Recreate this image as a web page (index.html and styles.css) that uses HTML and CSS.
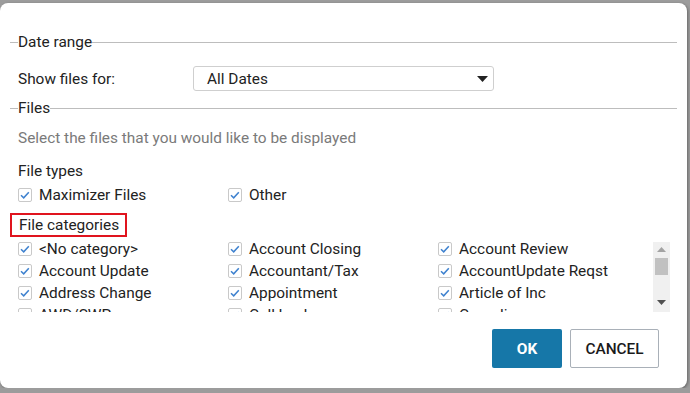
FILE: index.html
```html
<!DOCTYPE html>
<html>
<head>
<title>File filter</title>
<link rel="stylesheet" href="styles.css">
</head>
<body>
<div class="dialog">
	<div class="legend"><span class="legend_line_start"></span><span class="legend_text">Date range</span><span class="legend_line"></span></div>
	<div class="date_row">
		<label class="date_label" for="date_select">Show files for:</label>
		<div class="select_box" id="date_select">
			<span>All Dates</span>
			<svg class="select_arrow" width="11" height="6" viewBox="0 0 11 6"><polygon points="0,0 11,0 5.5,6" fill="#222"/></svg>
		</div>
	</div>
	<div class="legend files_legend"><span class="legend_line_start"></span><span class="legend_text">Files</span><span class="legend_line"></span></div>
	<div class="hint">Select the files that you would like to be displayed</div>
	<div class="group_title">File types</div>
	<div class="type_row">
		<div class="check_item"><span class="check_box"><svg width="14" height="14" viewBox="0 0 14 14"><polyline points="3,7.2 5.7,9.8 10.8,4.2" fill="none" stroke="#3f82cf" stroke-width="1.5"/></svg></span>Maximizer Files</div>
		<div class="check_item"><span class="check_box"><svg width="14" height="14" viewBox="0 0 14 14"><polyline points="3,7.2 5.7,9.8 10.8,4.2" fill="none" stroke="#3f82cf" stroke-width="1.5"/></svg></span>Other</div>
	</div>
	<div class="category_title"><span class="marked">File categories</span></div>
	<div class="category_area">
		<div class="category_view" id="category_grid"></div>
		<div class="scroll_bar">
			<svg class="scroll_up" width="9" height="5" viewBox="0 0 9 5"><polygon points="4.5,0 9,5 0,5" fill="#a3a3a3"/></svg>
			<div class="scroll_thumb"></div>
			<svg class="scroll_down" width="9" height="5" viewBox="0 0 9 5"><polygon points="0,0 9,0 4.5,5" fill="#505050"/></svg>
		</div>
	</div>
	<div class="button_row">
		<button class="ok_btn">OK</button>
		<button class="cancel_btn">CANCEL</button>
	</div>
</div>
<script>
	var categories = ["<No category>", "Account Closing", "Account Review",
		"Account Update", "Accountant/Tax", "AccountUpdate Reqst",
		"Address Change", "Appointment", "Article of Inc",
		"AWD/SWP", "Call back", "Compliance",
		"Contract", "Correspondence", "Credit Check"];
	var check = '<span class="check_box"><svg width="14" height="14" viewBox="0 0 14 14"><polyline points="3,7.2 5.7,9.8 10.8,4.2" fill="none" stroke="#3f82cf" stroke-width="1.5"/></svg></span>';
	var grid = document.getElementById('category_grid');
	for(var i = 0; i < categories.length; i++)
	{
		var item = document.createElement('div');
		item.className = 'check_item';
		item.innerHTML = check;
		item.appendChild(document.createTextNode(categories[i]));
		grid.appendChild(item);
	}
</script>
</body>
</html>
```

FILE: styles.css
```css
body
{
	margin : 0;
	background-color : #9c9c9c;
	font-family : Roboto, "Liberation Sans", sans-serif;
	font-size : 15.4px;
	color : #222;
}
.dialog
{
	margin-top : 3px;
	width : 687px;
	height : 385px;
	box-sizing : border-box;
	padding : 29px 10px 0 10px;
	background-color : white;
	border-radius : 8px;
	box-shadow : 1px 1px 3px rgba(0,0,0,0.35);
}
.legend
{
	display : flex;
	align-items : center;
	height : 20px;
}
.legend_line_start
{
	width : 8px;
	border-top : 1px solid #bdbdbd;
}
.legend_line
{
	flex : 1;
	border-top : 1px solid #bdbdbd;
}
.legend_text
{
	line-height : 20px;
}
.date_row
{
	display : flex;
	align-items : center;
	margin-top : 14px;
	padding-left : 8px;
}
.date_label
{
	width : 175px;
}
.select_box
{
	display : flex;
	align-items : center;
	justify-content : space-between;
	width : 301px;
	height : 25px;
	box-sizing : border-box;
	padding : 0 5px 0 13px;
	border : 1px solid #cfcfcf;
	border-radius : 3px;
}
.files_legend
{
	margin-top : 7px;
}
.hint
{
	margin-top : 10px;
	padding-left : 8px;
	line-height : 20px;
	color : #7a7a7a;
}
.group_title
{
	margin-top : 13px;
	padding-left : 8px;
	line-height : 20px;
}
.type_row
{
	display : grid;
	grid-template-columns : 210px 210px;
	margin-top : 4px;
	padding-left : 8px;
	height : 20px;
}
.check_item
{
	display : flex;
	align-items : center;
	height : 100%;
	white-space : nowrap;
}
.check_box
{
	display : inline-block;
	flex : none;
	width : 14px;
	height : 14px;
	box-sizing : border-box;
	margin-right : 7px;
	border : 1px solid #c9c9c9;
	border-radius : 2px;
	background-color : white;
}
.check_box svg
{
	display : block;
	margin : -1px;
}
.category_title
{
	margin-top : 8px;
}
.marked
{
	display : inline-block;
	height : 24px;
	line-height : 20px;
	box-sizing : border-box;
	padding : 0 6px 0 7px;
	border : 2px solid #e0141e;
}
.category_area
{
	display : flex;
	margin-top : 1px;
	padding : 0 7px 0 8px;
	height : 74px;
}
.category_view
{
	flex : 1;
	display : grid;
	grid-template-columns : 210px 210px 210px;
	grid-auto-rows : 22px;
	overflow : hidden;
}
.scroll_bar
{
	position : relative;
	margin-top : 4px;
	width : 17px;
	background-color : #f0f0f0;
}
.scroll_up
{
	position : absolute;
	left : 4px;
	top : 5px;
}
.scroll_down
{
	position : absolute;
	left : 4px;
	bottom : 7px;
}
.scroll_thumb
{
	position : absolute;
	left : 2px;
	top : 16px;
	width : 13px;
	height : 17px;
	background-color : #c1c1c1;
}
.button_row
{
	display : flex;
	justify-content : flex-end;
	gap : 8px;
	margin-top : 17px;
	padding-right : 18px;
}
.ok_btn
{
	width : 70px;
	height : 39px;
	padding : 0;
	border : none;
	border-radius : 2px;
	background-color : #1677a8;
	color : white;
	font-family : Roboto, "Liberation Sans", sans-serif;
	font-size : 15.4px;
	font-weight : bold;
}
.cancel_btn
{
	width : 89px;
	height : 39px;
	padding : 0;
	border : 1px solid #a9b0b8;
	border-radius : 2px;
	background-color : white;
	color : #1a1a1a;
	font-family : Roboto, "Liberation Sans", sans-serif;
	font-size : 15.4px;
	font-weight : 500;
}
```
